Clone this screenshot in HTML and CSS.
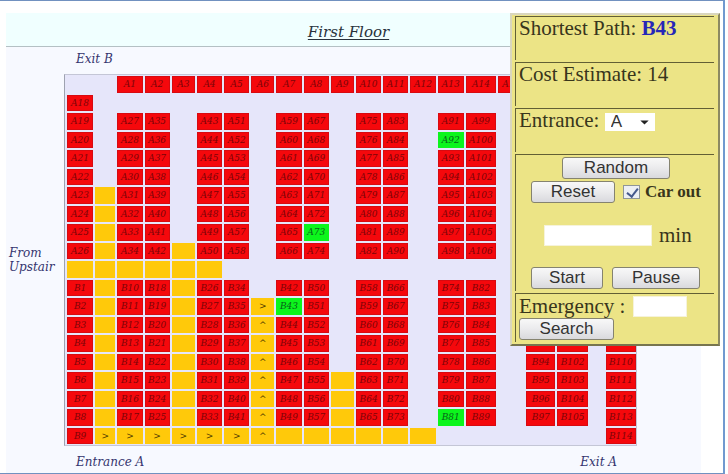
FILE: index.html
```html
<!DOCTYPE html>
<html lang="en">
<head>
<meta charset="utf-8">
<title>First Floor</title>
<link rel="stylesheet" href="styles.css">
</head>
<body>
<div class="frame">
  <main class="floor">
    <h1 class="floor-title">First Floor</h1>
    <div class="plan">
      <div class="gate gate-top">Exit B</div>
      <div class="gate gate-side">From<br>Upstair</div>
      <div class="map" id="map"></div>
      <div class="gate gate-bottom"><span>Entrance A</span><span>Exit A</span></div>
    </div>
  </main>
  <form class="panel">
    <section class="box">Shortest Path: <output class="target">B43</output></section>
    <section class="box">Cost Estimate: <output>14</output></section>
    <section class="box">
      <label for="entrance">Entrance:</label>
      <span class="picker">
        <select id="entrance"><option>A</option><option>B</option></select>
        <svg class="arrow" viewBox="0 0 10 6" aria-hidden="true"><path d="M0 0.5H10L5 5.5Z"/></svg>
      </span>
    </section>
    <section class="box controls">
      <div class="line"><button type="button" class="wide">Random</button></div>
      <div class="line line-reset">
        <button type="button">Reset</button>
        <label class="check"><input type="checkbox" checked>Car out</label>
      </div>
      <div class="line line-min">
        <input type="text" id="minutes" class="minutes"><label for="minutes">min</label>
      </div>
      <div class="line line-run">
        <button type="button" class="start">Start</button>
        <button type="button">Pause</button>
      </div>
    </section>
    <section class="box last">
      <div class="line-emergency"><label for="emergency">Emergency :</label><input type="text" id="emergency" class="emergency"></div>
      <button type="button" class="search">Search</button>
    </section>
  </form>
</div>
<script src="map.js"></script>
</body>
</html>
```
FILE: styles.css
```css
* { box-sizing: border-box; }

body {
  margin: 0;
  background: #fff;
  font-family: "Liberation Serif", serif;
}

.frame {
  position: relative;
  min-height: 100vh;
  margin-right: 3px;
  padding: 12px 22px 0 6px;
  border: 1px solid #7191c0;
  border-left: 0;
  border-right: 2px solid #7199cf;
  display: flex;
}

.floor {
  flex: 1;
  display: flex;
  flex-direction: column;
}

.floor-title {
  margin: 0;
  height: 34px;
  padding-right: 10px;
  background: #f0ffff;
  border-bottom: 1px solid #b4c0c4;
  color: #28323c;
  font: italic 15px/38px "DejaVu Serif", serif;
  text-align: center;
  text-decoration: underline;
  text-underline-offset: 2px;
}

.plan {
  flex: 1;
  display: grid;
  grid-template: 27px 1fr 27px / 58px 1fr 64px;
  background: #f7f9ff;
}

.gate {
  color: #34346e;
  font: italic 12px/14px "DejaVu Serif", serif;
}

.gate-top {
  grid-area: 1 / 2;
  padding: 5px 0 0 12px;
}

.gate-side {
  grid-area: 2 / 1;
  align-self: center;
  padding-left: 3px;
}

.gate-bottom {
  grid-area: 3 / 2;
  display: flex;
  justify-content: space-between;
  padding: 9px 20px 0 12px;
}

.map {
  grid-area: 2 / 2;
  display: grid;
  grid-template-columns:
    26fr 20fr 25fr 25fr 23fr 25fr 25fr 23fr 25fr 25fr 23fr
    25fr 25fr 25fr 26fr 30fr 26fr 29fr 30fr 14fr 30fr;
  grid-template-rows: repeat(20, 1fr);
  gap: 2px;
  padding: 1px 0 1px 2px;
  background: #e6e6fa;
  border: 1px solid #c4c6d6;
  border-left-color: #9ea2b0;
}

.cell {
  min-width: 0;
  overflow: hidden;
  color: #7c0408;
  font: italic 9px/16px "DejaVu Serif", serif;
  text-align: center;
  white-space: nowrap;
}

.taken { background: #f5080c; box-shadow: inset 0 0 0 1px #d80a10; }
.free { background: #0cf51c; color: #08601a; }
.path { background: #ffc90a; color: #4c3800; font-style: normal; }

.panel {
  position: absolute;
  top: 12px;
  right: 3px;
  width: 210px;
  padding: 1px 4px 2px 3px;
  background: #ece486;
  border: 2px solid #d9d6bd;
  border-right-color: #8c8962;
  border-bottom-color: #77754f;
  color: #38351c;
  font-size: 21px;
  line-height: 22px;
}

.box {
  height: 44px;
  margin-bottom: 2px;
  padding: 0 0 0 3px;
  border-top: 1px solid #625f35;
  border-left: 1px solid #625f35;
  white-space: nowrap;
}

.target {
  color: #2626b8;
  font-weight: bold;
}

.picker {
  position: relative;
  display: inline-block;
}

select {
  display: block;
  width: 50px;
  height: 18px;
  padding: 0 6px;
  appearance: none;
  background: #fff;
  border: 0;
  border-radius: 0;
  color: #333;
  font: 17px/18px "Liberation Sans", sans-serif;
}

.arrow {
  position: absolute;
  top: 7px;
  right: 6px;
  width: 9px;
  height: 5px;
  fill: #222;
  pointer-events: none;
}

.controls {
  height: 137px;
  padding: 2px 0 0;
}

.line {
  display: flex;
  align-items: center;
  height: 22px;
}

button {
  height: 22px;
  padding: 0;
  background: linear-gradient(#f8f8f8, #ececee 45%, #d9d9dd);
  border: 1px solid #85836f;
  border-radius: 3px;
  color: #333;
  font: 17px/18px "Liberation Sans", sans-serif;
}

.wide { width: 108px; margin-left: 46px; }

.line-reset {
  margin-top: 2px;
  padding-left: 15px;
  gap: 8px;
}

.line-reset button { width: 84px; }

.check {
  display: flex;
  align-items: center;
  gap: 5px;
  font-size: 17px;
  font-weight: bold;
}

.check input {
  appearance: none;
  width: 17px;
  height: 14px;
  margin: 0;
  background: #eceff4;
  border: 1px solid #8f9698;
}

.check input:checked::before {
  content: "";
  display: block;
  width: 5px;
  height: 9px;
  margin: 0 0 0 5px;
  border: solid #45598c;
  border-width: 0 2px 2px 0;
  transform: rotate(38deg);
}

.line-min {
  margin-top: 21px;
  padding-left: 28px;
  gap: 7px;
}

input[type="text"] {
  height: 21px;
  padding: 0 4px;
  background: #fff;
  border: 1px solid #f6f3da;
  font: 14px "Liberation Sans", sans-serif;
}

.minutes { width: 108px; }

.line-run {
  margin-top: 21px;
  padding-left: 15px;
  gap: 9px;
}

.line-run .start { width: 72px; }
.line-run button:last-child { width: 88px; }

.last {
  height: 49px;
  margin-bottom: 0;
}

.line-emergency {
  display: flex;
  align-items: center;
  height: 24px;
  gap: 8px;
}

.emergency { width: 54px; }

.search { display: block; width: 95px; }
```
FILE: map.js
```js
const COLS = 21;
const ROWS = 20;
const cells = {};

function put(row, col, kind, text) {
  cells[row + "," + col] = { kind, text };
}

// A run of numbered spaces going down one column.
function bay(letter, first, col, row, count) {
  for (let i = 0; i < count; i++) put(row + i, col, "taken", letter + (first + i));
}

for (let i = 1; i <= 15; i++) put(0, i + 1, "taken", "A" + i);
bay("A", 18, 0, 1, 9);
bay("B", 1, 0, 11, 9);
[2, 3, 5, 6, 8, 9, 11, 12, 14, 15].forEach((col, i) => {
  bay("A", 27 + i * 8, col, 2, 8);
  bay("B", 10 + i * 8, col, 11, 8);
});

// The three bays beside the exit start below the control panel.
[17, 18, 20].forEach((col) => put(14, col, "taken", ""));
bay("B", 94, 17, 15, 4);
bay("B", 102, 18, 15, 4);
bay("B", 110, 20, 15, 5);

[[3, 14], [8, 9], [12, 8], [18, 14]].forEach(([r, c]) => {
  cells[r + "," + c].kind = "free";
});

for (let r = 6; r < 19; r++) put(r, 1, "path", "");
for (let r = 9; r < 19; r++) put(r, 4, "path", "");
for (let c = 0; c < 6; c++) put(10, c, "path", "");
for (let r = 16; r < 19; r++) put(r, 10, "path", "");
for (let c = 1; c < 14; c++) put(19, c, "path", c < 7 ? ">" : "");
put(12, 7, "path", ">");
for (let r = 13; r < 20; r++) put(r, 7, "path", "^");

const map = document.getElementById("map");
for (let r = 0; r < ROWS; r++) {
  for (let c = 0; c < COLS; c++) {
    const cell = cells[r + "," + c];
    const el = document.createElement("div");
    el.className = cell ? "cell " + cell.kind : "cell";
    if (cell) el.textContent = cell.text;
    map.append(el);
  }
}
```
